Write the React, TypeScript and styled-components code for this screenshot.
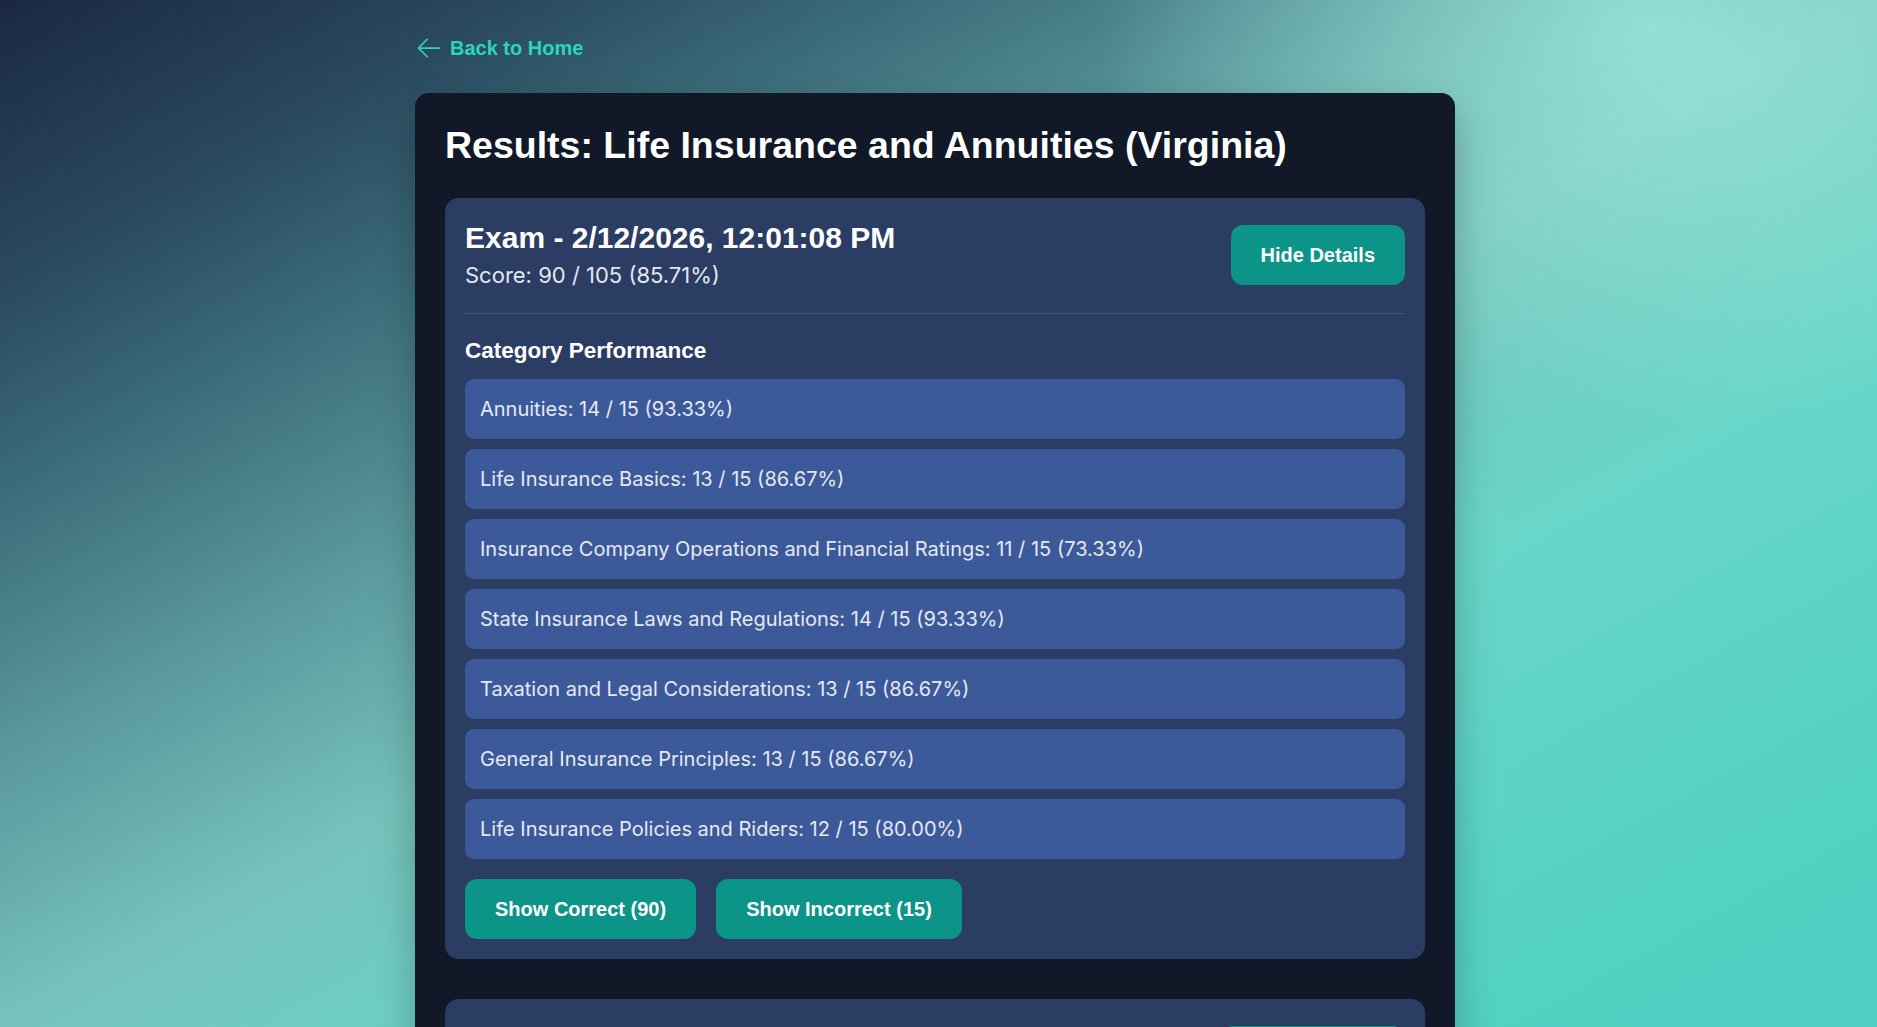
import React, { useState } from 'react';
import styled, { createGlobalStyle } from 'styled-components';

const GlobalStyle = createGlobalStyle`
    html, body {
        margin: 0;
        padding: 0;
    }
    body {
        min-height: 100vh;
        font-family: Inter, "Noto Sans", sans-serif;
        color: #e5e7eb;
        background:
            radial-gradient(ellipse 42% 55% at 88% 3%, rgba(165, 242, 226, 0.7), rgba(165, 242, 226, 0) 70%),
            linear-gradient(to bottom right, #1a2744 0%, #2a4a5f 14%, #3d6f7c 25%, #5c9c9f 38%, #76c2bc 50%, #69d6c8 66%, #55d2c4 85%, #4ecfc2 100%);
        background-attachment: fixed;
    }
`;

const Page = styled.div`
    padding: 34px 7px 60px 0;
`;

const Column = styled.div`
    max-width: 1040px;
    margin: 0 auto;
`;

const BackLink = styled.a`
    display: inline-flex;
    align-items: center;
    gap: 7px;
    color: #2dd4bf;
    font-family: "Liberation Sans", Arial, sans-serif;
    font-weight: 700;
    font-size: 20px;
    line-height: 24px;
    text-decoration: none;
    cursor: pointer;
`;

const Panel = styled.div`
    margin-top: 27px;
    background: #111827;
    border-radius: 14px;
    padding: 30px;
    box-shadow: 0 20px 40px rgba(0, 0, 0, 0.25);
`;

const Title = styled.h1`
    margin: 0 0 31px 0;
    font-family: "Liberation Sans", Arial, sans-serif;
    font-weight: 700;
    font-size: 37.5px;
    line-height: 44px;
    color: #ffffff;
`;

const AttemptList = styled.div`
    display: flex;
    flex-direction: column;
    gap: 40px;
`;

const Card = styled.div`
    background: #2b3d63;
    border-radius: 14px;
    padding: 20px;
`;

const CardHeader = styled.div<{ $open: boolean }>`
    display: flex;
    justify-content: space-between;
    align-items: center;
    padding-bottom: ${p => (p.$open ? '21px' : '0')};
    border-bottom: ${p => (p.$open ? '1px solid #43557a' : 'none')};
`;

const ExamTitle = styled.h2`
    margin: 0;
    font-family: "Liberation Sans", Arial, sans-serif;
    font-weight: 700;
    font-size: 30px;
    line-height: 39px;
    color: #ffffff;
`;

const Score = styled.div`
    margin-top: 2px;
    font-size: 22px;
    line-height: 33px;
    color: #e2e8f0;
`;

const Details = styled.div`
    padding-top: 23px;
`;

const SectionTitle = styled.h3`
    margin: 0 0 14px 0;
    font-family: "Liberation Sans", Arial, sans-serif;
    font-weight: 700;
    font-size: 22.5px;
    line-height: 28px;
    color: #ffffff;
`;

const CategoryList = styled.div`
    display: flex;
    flex-direction: column;
    gap: 10px;
`;

const CategoryRow = styled.div`
    background: #3c5a9a;
    border-radius: 9px;
    padding: 16px 15px;
    font-size: 20px;
    line-height: 28px;
    color: #e5e9f2;
`;

const ButtonRow = styled.div`
    display: flex;
    gap: 20px;
    margin-top: 20px;
`;

const Button = styled.button`
    background: #0d9488;
    color: #ffffff;
    border: none;
    border-radius: 12px;
    padding: 18px 30px;
    font-family: "Liberation Sans", Arial, sans-serif;
    font-weight: 700;
    font-size: 20px;
    line-height: 24px;
    cursor: pointer;
    white-space: nowrap;
`;

const ArrowLeft = () => (
    <svg width="28" height="28" viewBox="0 0 24 24" fill="none" stroke="currentColor" strokeWidth="1.5" strokeLinecap="round" strokeLinejoin="round">
        <path d="M10.5 19.5 3 12m0 0 7.5-7.5M3 12h18" />
    </svg>
);

const categories = [
    { name: 'Annuities', correct: 14, total: 15 },
    { name: 'Life Insurance Basics', correct: 13, total: 15 },
    { name: 'Insurance Company Operations and Financial Ratings', correct: 11, total: 15 },
    { name: 'State Insurance Laws and Regulations', correct: 14, total: 15 },
    { name: 'Taxation and Legal Considerations', correct: 13, total: 15 },
    { name: 'General Insurance Principles', correct: 13, total: 15 },
    { name: 'Life Insurance Policies and Riders', correct: 12, total: 15 },
];

const attempts = [
    { date: '2/12/2026, 12:01:08 PM', correct: 90, total: 105 },
    { date: '2/5/2026, 11:46:16 AM', correct: 84, total: 105 },
];

const pct = (a: number, b: number) => ((a / b) * 100).toFixed(2) + '%';

function Attempt({ date, correct, total, startOpen }: { date: string; correct: number; total: number; startOpen: boolean }) {
    const [open, setOpen] = useState(startOpen);

    return (
        <Card>
            <CardHeader $open={open}>
                <div>
                    <ExamTitle>Exam - {date}</ExamTitle>
                    <Score>Score: {correct} / {total} ({pct(correct, total)})</Score>
                </div>
                <Button onClick={() => setOpen(!open)}>{open ? 'Hide Details' : 'Show Details'}</Button>
            </CardHeader>
            {open && (
                <Details>
                    <SectionTitle>Category Performance</SectionTitle>
                    <CategoryList>
                        {categories.map(c => (
                            <CategoryRow key={c.name}>
                                {c.name}: {c.correct} / {c.total} ({pct(c.correct, c.total)})
                            </CategoryRow>
                        ))}
                    </CategoryList>
                    <ButtonRow>
                        <Button>Show Correct ({correct})</Button>
                        <Button>Show Incorrect ({total - correct})</Button>
                    </ButtonRow>
                </Details>
            )}
        </Card>
    );
}

export default function App() {
    return (
        <>
            <GlobalStyle />
            <Page>
                <Column>
                    <BackLink>
                        <ArrowLeft />
                        Back to Home
                    </BackLink>
                    <Panel>
                        <Title>Results: Life Insurance and Annuities (Virginia)</Title>
                        <AttemptList>
                            {attempts.map((a, i) => (
                                <Attempt key={a.date} {...a} startOpen={i === 0} />
                            ))}
                        </AttemptList>
                    </Panel>
                </Column>
            </Page>
        </>
    );
}
